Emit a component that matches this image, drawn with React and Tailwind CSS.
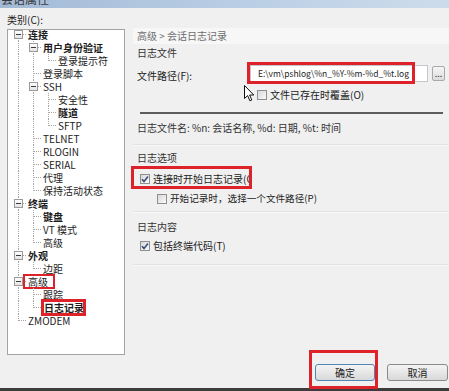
import React from 'react';

const tree = [
  { t: '连接', b: 1, ch: [
    { t: '用户身份验证', b: 1, ch: [{ t: '登录提示符' }] },
    { t: '登录脚本' },
    { t: 'SSH', ch: [{ t: '安全性' }, { t: '隧道', b: 1 }, { t: 'SFTP' }] },
    { t: 'TELNET' },
    { t: 'RLOGIN' },
    { t: 'SERIAL' },
    { t: '代理' },
    { t: '保持活动状态' },
  ] },
  { t: '终端', b: 1, ch: [{ t: '键盘', b: 1 }, { t: 'VT 模式' }, { t: '高级' }] },
  { t: '外观', b: 1, ch: [{ t: '边距' }] },
  { t: '高级', mark: 'root', ch: [{ t: '跟踪' }, { t: '日志记录', b: 1, mark: 'sel' }] },
  { t: 'ZMODEM' },
];

function flatten(nodes, level, anc, out) {
  nodes.forEach((n, i) => {
    const last = i === nodes.length - 1;
    out.push({ ...n, level, last, anc, first: level === 0 && i === 0 });
    if (n.ch) flatten(n.ch, level + 1, [...anc, !last], out);
  });
  return out;
}

const rows = flatten(tree, 0, [], []);

function TreeRow({ row }) {
  return (
    <div className="flex h-[13px] shrink-0">
      {row.anc.map((cont, k) => (
        <span key={k} className="relative w-[15px] h-full shrink-0">
          {cont && <span className="absolute left-[7px] top-0 h-full border-l border-dotted border-[#a5a5a5]" />}
        </span>
      ))}
      <span className="relative w-[15px] h-full shrink-0">
        {!row.first && <span className="absolute left-[7px] top-0 h-[7px] border-l border-dotted border-[#a5a5a5]" />}
        {!row.last && <span className="absolute left-[7px] top-[6px] bottom-0 border-l border-dotted border-[#a5a5a5]" />}
        <span className="absolute left-[7px] right-0 top-[6px] border-t border-dotted border-[#a5a5a5]" />
        {row.ch && (
          <span className="absolute left-[3px] top-[2px] w-[9px] h-[9px] border border-[#9a9a9a] bg-linear-to-b from-white to-[#e4e4e4] flex items-center justify-center">
            <span className="w-[5px] h-px bg-[#3b3b3b]" />
          </span>
        )}
      </span>
      <span
        className={
          'relative h-full leading-[13px] whitespace-nowrap text-[10px] text-[#1c1c1c] ' +
          (row.b ? 'font-bold ' : '') +
          (row.mark === 'sel' ? 'pl-[3px]' : 'ml-[2px]')
        }
      >
        {row.mark === 'sel' && <span className="absolute left-0 top-[-2px] w-[45px] h-[17px] bg-white" />}
        <span className="relative">{row.t}</span>
        {row.mark === 'root' && (
          <span className="absolute left-[-5px] top-[-1px] w-[32px] h-[15px] border-2 border-[#de2229]" />
        )}
        {row.mark === 'sel' && (
          <span className="absolute left-0 top-[-2px] w-[45px] h-[17px] border-[3px] border-[#de2229]" />
        )}
      </span>
    </div>
  );
}

function Check({ on }) {
  return (
    <span className="w-[10px] h-[10px] shrink-0 border border-[#8e8f8f] bg-linear-to-br from-[#d8d8d8] to-[#fafafa] flex items-center justify-center">
      {on && (
        <svg width="8" height="8" viewBox="0 0 8 8">
          <path d="M1 4.2 L3 6.4 L7 1.4" fill="none" stroke="#3c4d7c" strokeWidth="1.6" />
        </svg>
      )}
    </span>
  );
}

function Divider({ className }) {
  return <div className={'h-[2px] border-t border-[#e2e2e2] border-b border-b-[#f9f9f9] ' + className} />;
}

export default function App() {
  return (
    <div className="w-[449px] h-[391px] bg-[#f0f0f0] flex flex-col overflow-hidden font-['Noto_Sans_CJK_SC','Noto_Sans',sans-serif] text-[10px] text-[#1c1c1c]">
      {/* title bar, mostly cut off */}
      <div className="h-[8px] shrink-0 overflow-hidden bg-linear-to-r from-[#a3bad6] via-[#b8cde4] to-[#cddcec] pl-[1px]">
        <div className="-mt-[8px] text-[12px] leading-[14px] text-[#3a3a3a]">会话属性</div>
      </div>

      <div className="flex h-[350px] shrink-0">
        {/* category tree */}
        <div className="w-[133px] shrink-0 pl-[7px] flex flex-col">
          <div className="h-[21px] pt-[5px] leading-[14px]">类别(C):</div>
          <div className="w-[118px] h-[326px] border border-[#a3a3a3] bg-white overflow-hidden">
            <div className="-mt-[2px] pl-[3px] flex flex-col">
              {rows.map((r, i) => (
                <TreeRow key={i} row={r} />
              ))}
            </div>
          </div>
        </div>

        {/* settings panel */}
        <div className="flex-1 flex flex-col pt-[20px]">
          <div className="h-[16px] bg-[#f7f7f7] pl-[4px] leading-[16px] text-[#6e6e6e]">高级 &gt; 会话日志记录</div>

          <div className="mt-[2px] h-[14px] leading-[14px] pl-[4px] text-[#333]">日志文件</div>

          <div className="mt-[5px] h-[17px] flex items-center">
            <span className="w-[117px] pl-[4px] mt-[4px] leading-[13px]">文件路径(F):</span>
            <div className="relative">
              <div className="w-[178px] h-[17px] bg-white border border-[#c5c7cc] flex items-center pl-[7px] whitespace-nowrap overflow-hidden">
                <span className="text-[8.5px] leading-[13px] text-[#1c1c1c]">E:\vm\pshlog\%n_%Y-%m-%d_%t.log</span>
              </div>
              <span className="absolute left-[-3px] top-[-3px] w-[168px] h-[22px] border-[3px] border-[#de2229]" />
            </div>
            <button className="ml-[4px] w-[13px] h-[15px] border border-[#a9a9a9] rounded-[2px] bg-linear-to-b from-[#f6f6f6] to-[#dcdcdc] text-[9px] leading-[8px] text-[#333] flex items-end justify-center pb-[2px]">...</button>
          </div>

          <div className="mt-[6px] h-[13px] flex items-center pl-[124px]">
            <span className="relative flex">
              <Check />
              <svg className="absolute left-[-13px] top-[-5px]" width="11" height="17" viewBox="0 0 11 17">
                <path d="M0.5 0.5 L0.5 13.5 L3.6 10.6 L5.9 15.8 L7.8 15 L5.6 10 L9.8 10 Z" fill="white" stroke="#111" strokeWidth="1" strokeLinejoin="round" />
              </svg>
            </span>
            <span className="ml-[3px] leading-[13px]">文件已存在时覆盖(O)</span>
          </div>

          <div className="mt-[11px] ml-[7px] mr-[6px] h-[2px] bg-[#5c5c5c]" />

          <div className="mt-[7px] h-[14px] leading-[14px] pl-[4px] text-[#333] whitespace-nowrap">日志文件名: %n: 会话名称, %d: 日期, %t: 时间</div>

          <Divider className="mt-[9px]" />

          <div className="mt-[5px] h-[14px] leading-[14px] pl-[4px] text-[#333]">日志选项</div>

          <div className="relative mt-[7px] h-[13px] flex items-center pl-[7px]">
            <Check on />
            <span className="ml-[3px] leading-[13px] whitespace-nowrap">连接时开始日志记录(C)</span>
            <span className="absolute left-[118px] top-[-6px] w-[8px] h-[23px] bg-[#f0f0f0]" />
            <span className="absolute left-[-2px] top-[-6px] w-[121px] h-[23px] border-[3px] border-[#de2229]" />
          </div>

          <div className="mt-[7px] h-[13px] flex items-center pl-[24px]">
            <Check />
            <span className="ml-[3px] leading-[13px] whitespace-nowrap text-[9.6px]">开始记录时，选择一个文件路径(P)</span>
          </div>

          <Divider className="mt-[6px]" />

          <div className="mt-[7px] h-[14px] leading-[14px] pl-[4px] text-[#333]">日志内容</div>

          <div className="mt-[5px] h-[13px] flex items-center pl-[7px]">
            <Check on />
            <span className="ml-[3px] leading-[13px]">包括终端代码(T)</span>
          </div>

          <Divider className="mt-[12px]" />
        </div>
      </div>

      {/* dialog buttons */}
      <div className="h-[30px] shrink-0 flex justify-end items-start pt-[6px] pr-[1px] gap-[12px]">
        <div className="relative">
          <button className="w-[60px] h-[17px] rounded-[3px] border border-[#4f86b8] bg-linear-to-b from-[#f4f4f4] to-[#d9d9d9] text-[10px] leading-[15px] text-[#222]">确定</button>
          <span className="absolute left-[-6px] top-[-14px] right-[-3px] bottom-[-8px] border-[3px] border-[#de2229]" />
        </div>
        <button className="w-[61px] h-[17px] rounded-[3px] border border-[#8a8a8a] bg-linear-to-b from-[#f4f4f4] to-[#d9d9d9] text-[10px] leading-[15px] text-[#222]">取消</button>
      </div>
      <div className="h-[3px] shrink-0 bg-[#3c3c3c]" />
    </div>
  );
}
